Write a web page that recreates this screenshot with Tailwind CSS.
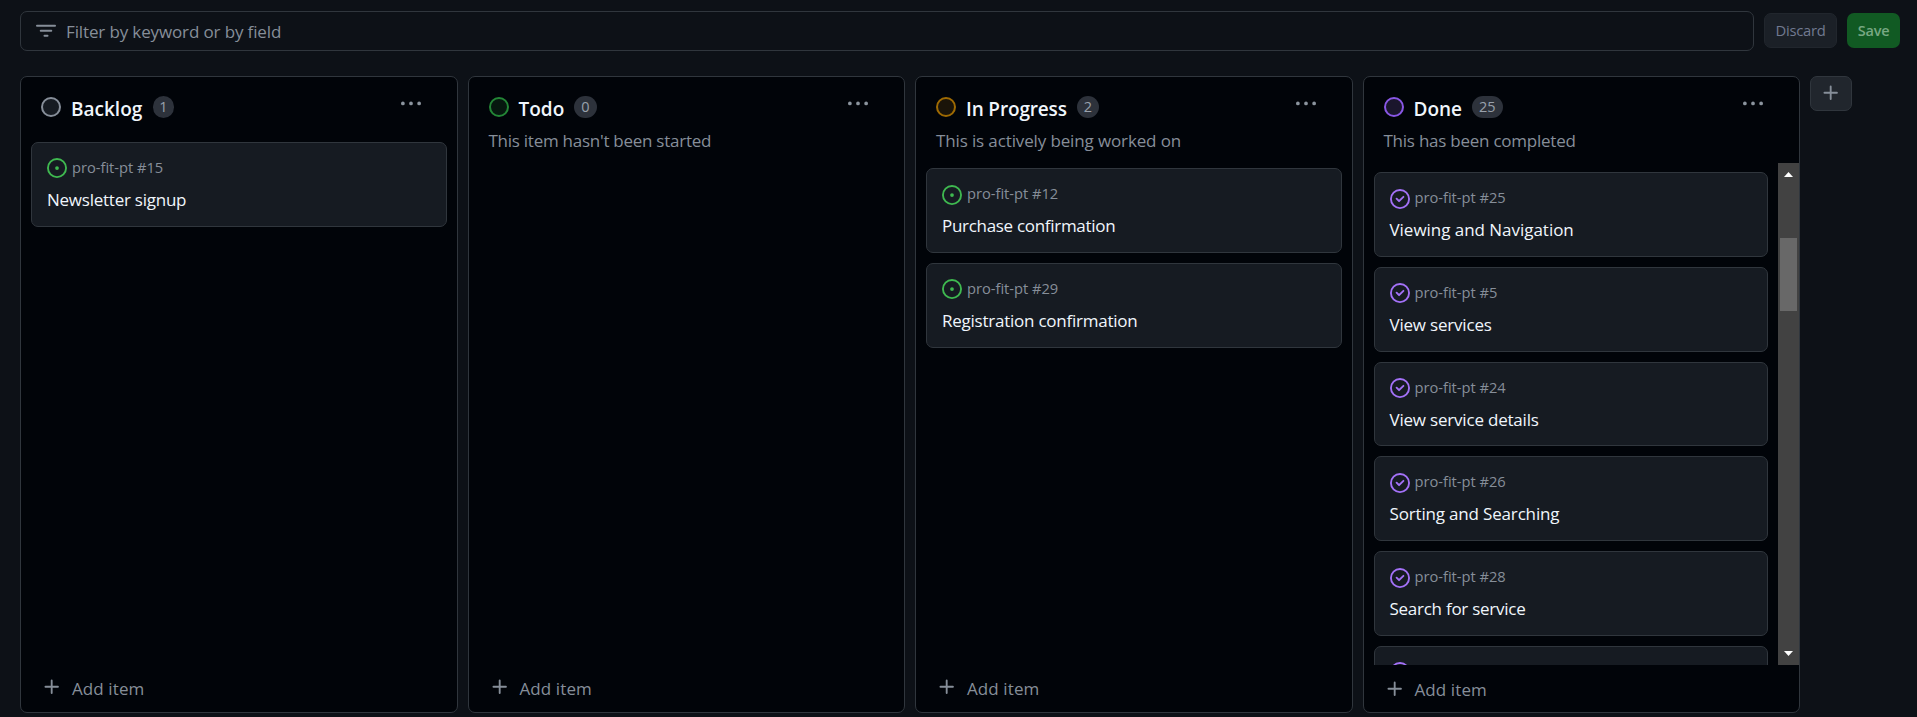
<!DOCTYPE html>
<html lang="en">
<head>
<meta charset="utf-8">
<title>Project board</title>
<script src="https://cdn.jsdelivr.net/npm/@tailwindcss/browser@4"></script>
</head>
<body class="h-[717px] overflow-hidden bg-[#0d1117] text-[#868e99] font-['Open_Sans',sans-serif]">
<svg class="hidden">
  <symbol id="open" viewBox="0 0 16 16"><path d="M8 9.5a1.5 1.5 0 1 0 0-3 1.5 1.5 0 0 0 0 3Z"/><path d="M8 0a8 8 0 1 1 0 16A8 8 0 0 1 8 0ZM1.5 8a6.5 6.5 0 1 0 13 0 6.5 6.5 0 0 0-13 0Z"/></symbol>
  <symbol id="closed" viewBox="0 0 16 16"><path d="M11.28 6.78a.75.75 0 0 0-1.06-1.06L7.25 8.69 5.78 7.22a.75.75 0 0 0-1.06 1.06l2 2a.75.75 0 0 0 1.06 0l3.5-3.5Z"/><path d="M16 8A8 8 0 1 1 0 8a8 8 0 0 1 16 0Zm-1.5 0a6.5 6.5 0 1 0-13 0 6.5 6.5 0 0 0 13 0Z"/></symbol>
  <symbol id="dots" viewBox="0 0 16 16"><path d="M8 9a1.5 1.5 0 1 0 0-3 1.5 1.5 0 0 0 0 3ZM1.5 9a1.5 1.5 0 1 0 0-3 1.5 1.5 0 0 0 0 3Zm13 0a1.5 1.5 0 1 0 0-3 1.5 1.5 0 0 0 0 3Z"/></symbol>
  <symbol id="plus" viewBox="0 0 16 16"><path d="M7.75 2a.75.75 0 0 1 .75.75V7h4.25a.75.75 0 0 1 0 1.5H8.5v4.25a.75.75 0 0 1-1.5 0V8.5H2.75a.75.75 0 0 1 0-1.5H7V2.75A.75.75 0 0 1 7.75 2Z"/></symbol>
</svg>

<div class="flex items-center pt-[11px] pl-5">
  <div class="flex h-10 w-[1734px] items-center rounded-[7px] border border-[#30363d] pl-[15px]">
    <svg class="size-5 shrink-0 fill-[#868e99]" viewBox="0 0 16 16"><path d="M.75 3h14.5a.75.75 0 0 1 0 1.5H.75a.75.75 0 0 1 0-1.5ZM3 7.75A.75.75 0 0 1 3.75 7h8.5a.75.75 0 0 1 0 1.5h-8.5A.75.75 0 0 1 3 7.75Zm3 4a.75.75 0 0 1 .75-.75h2.5a.75.75 0 0 1 0 1.5h-2.5a.75.75 0 0 1-.75-.75Z"/></svg>
    <span class="mt-px ml-[10px] text-[17px] leading-[26px] tracking-[-0.13px]">Filter by keyword or by field</span>
  </div>
  <button class="ml-2.5 -mt-px h-[35px] w-[73px] rounded-[7px] border border-[#21262d] bg-[#1b2027] text-[14.8px] font-medium tracking-[-0.25px] text-[#717990]">Discard</button>
  <button class="ml-2.5 -mt-px h-[35px] w-[53px] rounded-[7px] bg-[#115a23] text-[14.5px] font-semibold tracking-[-0.2px] text-[#78a883]">Save</button>
</div>

<div class="mt-[25px] flex h-[637px] items-start gap-2.5 pl-5">

  <section class="flex h-full w-[437.5px] flex-col rounded-[7px] border border-[#30363d] bg-[#010409]">
    <header class="pt-[19px] pr-9 pb-[19px] pl-5">
      <div class="flex h-[22px] items-center">
        <span class="size-5 rounded-full border-2 border-[#868e99] bg-[#161b22]"></span>
        <h2 class="mt-[3px] ml-[10px] text-[19px] leading-[22px] font-semibold text-[#f0f6fc]">Backlog</h2>
        <span class="ml-[11px] flex h-[22px] min-w-5 items-center justify-center rounded-full bg-[#2d323b] px-1.5 text-[14.5px] leading-none font-medium text-[#99a1ac]">1</span>
        <svg class="-mt-[6px] ml-auto size-5 fill-[#8b949e]"><use href="#dots"/></svg>
      </div>
    </header>
    <div class="flex flex-1 flex-col gap-2.5 px-2.5 pt-[5px]">
      <article class="h-[84.75px] rounded-[7px] border border-[#30363d] bg-[#161b22] px-[15px] pt-[15px]">
        <div class="flex h-5 items-center gap-[5px]"><svg class="size-5 fill-[#3fb950]"><use href="#open"/></svg><span class="-mt-0.5 text-[14.7px] leading-5 tracking-[-0.02px]">pro-fit-pt #15</span></div>
        <h3 class="mt-[9px] text-[17px] leading-[26px] tracking-[-0.24px] text-[#f0f6fc]">Newsletter signup</h3>
      </article>
    </div>
    <footer class="flex h-[36.5px] items-start pl-[21px]"><svg class="mt-px size-5 fill-[#868e99]"><use href="#plus"/></svg><span class="ml-2.5 text-[17px] leading-[26px] font-medium tracking-[0.1px]">Add item</span></footer>
  </section>

  <section class="flex h-full w-[437.5px] flex-col rounded-[7px] border border-[#30363d] bg-[#010409]">
    <header class="pt-[19px] pr-9 pb-[9px] pl-5">
      <div class="flex h-[22px] items-center">
        <span class="size-5 rounded-full border-2 border-[#238636] bg-[#06180f]"></span>
        <h2 class="mt-[3px] ml-[10px] text-[19px] leading-[22px] font-semibold text-[#f0f6fc]">Todo</h2>
        <span class="ml-[10px] flex h-[22px] min-w-5 items-center justify-center rounded-full bg-[#2d323b] px-[7px] text-[14.5px] leading-none font-medium text-[#99a1ac]">0</span>
        <svg class="-mt-[6px] ml-auto size-5 fill-[#8b949e]"><use href="#dots"/></svg>
      </div>
      <p class="mt-[10px] text-[17px] leading-[26px] tracking-[-0.26px]">This item hasn't been started</p>
    </header>
    <div class="flex-1"></div>
    <footer class="flex h-[36.5px] items-start pl-[21px]"><svg class="mt-px size-5 fill-[#868e99]"><use href="#plus"/></svg><span class="ml-2.5 text-[17px] leading-[26px] font-medium tracking-[0.1px]">Add item</span></footer>
  </section>

  <section class="flex h-full w-[437.5px] flex-col rounded-[7px] border border-[#30363d] bg-[#010409]">
    <header class="pt-[19px] pr-9 pb-[9px] pl-5">
      <div class="flex h-[22px] items-center">
        <span class="size-5 rounded-full border-2 border-[#9e6a03] bg-[#1a1409]"></span>
        <h2 class="mt-[3px] ml-[10px] text-[19px] leading-[22px] font-semibold tracking-[-0.15px] text-[#f0f6fc]">In Progress</h2>
        <span class="ml-[10px] flex h-[22px] min-w-5 items-center justify-center rounded-full bg-[#2d323b] px-[7px] text-[14.5px] leading-none font-medium text-[#99a1ac]">2</span>
        <svg class="-mt-[6px] ml-auto size-5 fill-[#8b949e]"><use href="#dots"/></svg>
      </div>
      <p class="mt-[10px] text-[17px] leading-[26px] tracking-[-0.13px]">This is actively being worked on</p>
    </header>
    <div class="flex flex-1 flex-col gap-2.5 px-2.5 pt-[5px]">
      <article class="h-[84.75px] rounded-[7px] border border-[#30363d] bg-[#161b22] px-[15px] pt-[15px]">
        <div class="flex h-5 items-center gap-[5px]"><svg class="mt-px size-5 fill-[#3fb950]"><use href="#open"/></svg><span class="-mt-0.5 text-[14.7px] leading-5 tracking-[-0.02px]">pro-fit-pt #12</span></div>
        <h3 class="mt-[9px] text-[17px] leading-[26px] tracking-[-0.3px] text-[#f0f6fc]">Purchase confirmation</h3>
      </article>
      <article class="h-[84.75px] rounded-[7px] border border-[#30363d] bg-[#161b22] px-[15px] pt-[15px]">
        <div class="flex h-5 items-center gap-[5px]"><svg class="size-5 fill-[#3fb950]"><use href="#open"/></svg><span class="-mt-0.5 text-[14.7px] leading-5 tracking-[-0.02px]">pro-fit-pt #29</span></div>
        <h3 class="mt-[9px] text-[17px] leading-[26px] tracking-[-0.24px] text-[#f0f6fc]">Registration confirmation</h3>
      </article>
    </div>
    <footer class="flex h-[36.5px] items-start pl-[21px]"><svg class="mt-px size-5 fill-[#868e99]"><use href="#plus"/></svg><span class="ml-2.5 text-[17px] leading-[26px] font-medium tracking-[0.1px]">Add item</span></footer>
  </section>

  <section class="flex h-full w-[437.5px] flex-col rounded-[7px] border border-[#30363d] bg-[#010409]">
    <header class="pt-[19px] pr-9 pb-[9px] pl-5">
      <div class="flex h-[22px] items-center">
        <span class="size-5 rounded-full border-2 border-[#8957e5] bg-[#1a162c]"></span>
        <h2 class="mt-[3px] ml-[10px] text-[19px] leading-[22px] font-semibold text-[#f0f6fc]">Done</h2>
        <span class="ml-[10px] flex h-[22px] items-center justify-center rounded-full bg-[#2d323b] px-[7px] text-[14.5px] leading-none font-medium text-[#99a1ac]">25</span>
        <svg class="-mt-[6px] ml-auto size-5 fill-[#8b949e]"><use href="#dots"/></svg>
      </div>
      <p class="mt-[10px] text-[17px] leading-[26px] tracking-[-0.24px]">This has been completed</p>
    </header>
    <div class="flex h-[502px] overflow-hidden">
      <div class="flex flex-1 flex-col gap-2.5 px-2.5 pt-[9px]">
        <article class="h-[84.75px] shrink-0 rounded-[7px] border border-[#30363d] bg-[#161b22] px-[15px] pt-[15px]">
          <div class="flex h-5 items-center gap-[5px]"><svg class="mt-px size-5 fill-[#a371f7]"><use href="#closed"/></svg><span class="-mt-0.5 text-[14.7px] leading-5 tracking-[-0.02px]">pro-fit-pt #25</span></div>
          <h3 class="mt-[9px] text-[17px] leading-[26px] tracking-[-0.03px] text-[#f0f6fc]">Viewing and Navigation</h3>
        </article>
        <article class="h-[84.75px] shrink-0 rounded-[7px] border border-[#30363d] bg-[#161b22] px-[15px] pt-[15px]">
          <div class="flex h-5 items-center gap-[5px]"><svg class="size-5 fill-[#a371f7]"><use href="#closed"/></svg><span class="-mt-0.5 text-[14.7px] leading-5 tracking-[-0.02px]">pro-fit-pt #5</span></div>
          <h3 class="mt-[9px] text-[17px] leading-[26px] tracking-[-0.2px] text-[#f0f6fc]">View services</h3>
        </article>
        <article class="h-[84.75px] shrink-0 rounded-[7px] border border-[#30363d] bg-[#161b22] px-[15px] pt-[15px]">
          <div class="flex h-5 items-center gap-[5px]"><svg class="size-5 fill-[#a371f7]"><use href="#closed"/></svg><span class="-mt-0.5 text-[14.7px] leading-5 tracking-[-0.02px]">pro-fit-pt #24</span></div>
          <h3 class="mt-[9px] text-[17px] leading-[26px] tracking-[-0.2px] text-[#f0f6fc]">View service details</h3>
        </article>
        <article class="h-[84.75px] shrink-0 rounded-[7px] border border-[#30363d] bg-[#161b22] px-[15px] pt-[15px]">
          <div class="flex h-5 items-center gap-[5px]"><svg class="mt-px size-5 fill-[#a371f7]"><use href="#closed"/></svg><span class="-mt-0.5 text-[14.7px] leading-5 tracking-[-0.02px]">pro-fit-pt #26</span></div>
          <h3 class="mt-[9px] text-[17px] leading-[26px] tracking-[-0.17px] text-[#f0f6fc]">Sorting and Searching</h3>
        </article>
        <article class="h-[84.75px] shrink-0 rounded-[7px] border border-[#30363d] bg-[#161b22] px-[15px] pt-[15px]">
          <div class="flex h-5 items-center gap-[5px]"><svg class="mt-px size-5 fill-[#a371f7]"><use href="#closed"/></svg><span class="-mt-0.5 text-[14.7px] leading-5 tracking-[-0.02px]">pro-fit-pt #28</span></div>
          <h3 class="mt-[9px] text-[17px] leading-[26px] tracking-[-0.26px] text-[#f0f6fc]">Search for service</h3>
        </article>
        <article class="h-[84.75px] shrink-0 rounded-[7px] border border-[#30363d] bg-[#161b22] px-[15px] pt-[15px]">
          <svg class="size-5 fill-[#a371f7]"><use href="#closed"/></svg>
        </article>
      </div>
      <div class="flex w-[21px] flex-col items-center bg-[#424242]">
        <svg class="mt-[9px] h-[5px] w-[9px] fill-white" viewBox="0 0 9 5"><path d="M0 5 4.5 0 9 5Z"/></svg>
        <div class="mt-[61px] h-[73px] w-[17px] bg-[#686868]"></div>
        <svg class="mt-auto mb-[9px] h-[5px] w-[9px] fill-white" viewBox="0 0 9 5"><path d="M0 0 4.5 5 9 0Z"/></svg>
      </div>
    </div>
    <footer class="flex items-start pt-3 pl-[21px]"><svg class="mt-0.5 size-5 fill-[#868e99]"><use href="#plus"/></svg><span class="ml-2.5 text-[17px] leading-[26px] font-medium tracking-[0.1px]">Add item</span></footer>
  </section>

  <button class="flex h-[35px] w-[42px] items-center justify-center rounded-[7px] border border-[#30363d] bg-[#21262d]"><svg class="-mt-px size-5 fill-[#868e99]"><use href="#plus"/></svg></button>
</div>
</body>
</html>
